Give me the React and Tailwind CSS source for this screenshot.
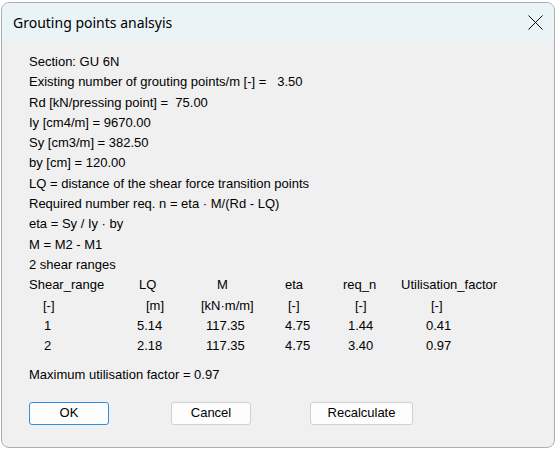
import React from "react";
import { X } from "lucide-react";

const LINES = [
  "Section: GU 6N",
  "Existing number of grouting points/m [-] =   3.50",
  "Rd [kN/pressing point] =  75.00",
  "Iy [cm4/m] = 9670.00",
  "Sy [cm3/m] = 382.50",
  "by [cm] = 120.00",
  "LQ = distance of the shear force transition points",
  "Required number req. n = eta · M/(Rd - LQ)",
  "eta = Sy / Iy · by",
  "M = M2 - M1",
  "2 shear ranges",
];

// column widths: 100, 67, 80, 60, 60, rest
const COLS = ["w-[100px]", "w-[67px]", "w-[80px]", "w-[60px]", "w-[60px]", "w-[120px]"];

const ROWS = [
  [
    ["Shear_range", "pl-0"],
    ["LQ", "pl-[10px]"],
    ["M", "pl-[21px]"],
    ["eta", "pl-[9px]"],
    ["req_n", "pl-[7px]"],
    ["Utilisation_factor", "pl-[5px]"],
  ],
  [
    ["[-]", "pl-[14px]"],
    ["[m]", "pl-[17px]"],
    ["[kN·m/m]", "pl-[5px]"],
    ["[-]", "pl-[12px]"],
    ["[-]", "pl-[19px]"],
    ["[-]", "pl-[35px]"],
  ],
  [
    ["1", "pl-[15px]"],
    ["5.14", "pl-[8px]"],
    ["117.35", "pl-[10px]"],
    ["4.75", "pl-[9px]"],
    ["1.44", "pl-[12px]"],
    ["0.41", "pl-[30px]"],
  ],
  [
    ["2", "pl-[15px]"],
    ["2.18", "pl-[8px]"],
    ["117.35", "pl-[10px]"],
    ["4.75", "pl-[9px]"],
    ["3.40", "pl-[12px]"],
    ["0.97", "pl-[30px]"],
  ],
];

function Btn({ children, primary, width }) {
  return (
    <button
      className={`h-[23px] ${width} rounded-[3px] border bg-[#fdfdfd] text-[13px] text-black ${
        primary ? "border-[#2f8fdf]" : "border-[#d0d0d0]"
      }`}
    >
      {children}
    </button>
  );
}

export default function App() {
  return (
    <div className="w-[556px] h-[449px] bg-white pt-[2px] pl-[1px]">
      <div
        className="w-[554px] h-[446px] rounded-[8px] border border-[#a8b0b4] bg-[#f0f0f0] overflow-hidden flex flex-col"
        style={{ fontFamily: '"Liberation Sans", Arial, sans-serif' }}
      >
        {/* title bar */}
        <div className="h-[39px] bg-[#eaf3f6] flex items-center justify-between pl-[11px] pr-[5px] shrink-0">
          <span
            className="text-[14px] text-black pb-[1px]"
            style={{ fontFamily: '"Noto Sans", "Open Sans", sans-serif' }}
          >
            Grouting points analsyis
          </span>
          <X className="w-[27px] h-[27px] text-black" strokeWidth={0.85} />
        </div>

        {/* body */}
        <div className="pl-[27px] pt-[10px] text-[13px] leading-[20.3px] text-black whitespace-pre">
          {LINES.map((l) => (
            <div key={l}>{l}</div>
          ))}
          {ROWS.map((row, i) => (
            <div key={i} className="flex">
              {row.map(([t, pad], j) => (
                <div key={j} className={`${COLS[j]} ${pad}`}>
                  {t}
                </div>
              ))}
            </div>
          ))}
          <div className="mt-[9px]">Maximum utilisation factor = 0.97</div>

          <div className="flex mt-[16px]">
            <Btn primary width="w-[80px]">OK</Btn>
            <div className="ml-[62px]">
              <Btn width="w-[80px]">Cancel</Btn>
            </div>
            <div className="ml-[59px]">
              <Btn width="w-[103px]">Recalculate</Btn>
            </div>
          </div>
        </div>
      </div>
    </div>
  );
}
